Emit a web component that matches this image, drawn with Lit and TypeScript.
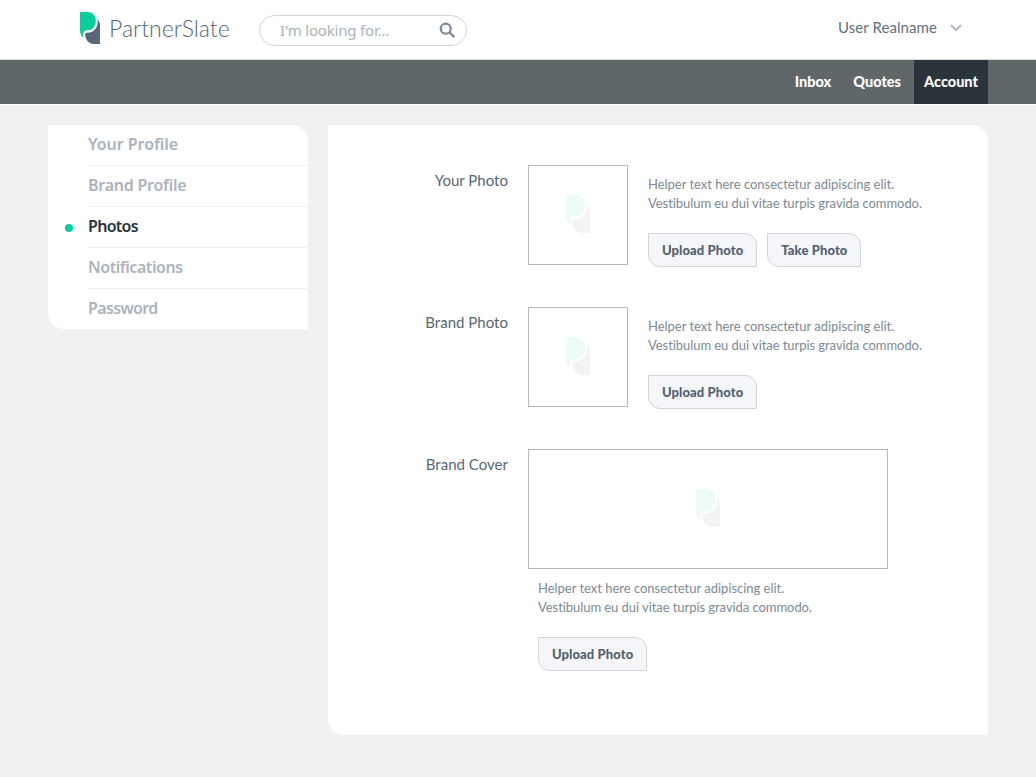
import { LitElement, html, css, svg } from "lit";
import { customElement, property } from "lit/decorators.js";
import { classMap } from "lit/directives/class-map.js";
import { styleMap } from "lit/directives/style-map.js";

@customElement("ps-mark")
class PsMark extends LitElement {
  static styles = css`
    :host { display: block; }
    svg { display: block; width: 100%; height: 100%; }
    .green { fill: #06cd9b; }
    .slate { fill: #566778; }
  `;
  render() {
    return html`<svg viewBox="0 0 24 38" preserveAspectRatio="none">
      ${svg`<path class="green" d="M0 0H9C15.500 0 19 5 19 10.800S15 21.800 9.500 21.800C5.400 21.800 4 23.500 4 26.500V30.500C1.600 28.500 0 25.500 0 22Z"/>
      <path class="slate" d="M21 8.500C23 10.300 24 12.800 24 16V38H17C10.500 38 6.200 33 6.200 26.500C6.200 25 7.200 24.700 9 24.700C17 24.400 22.800 17.500 21 8.500Z"/>`}
    </svg>`;
  }
}

@customElement("ps-photo-row")
class PsPhotoRow extends LitElement {
  @property() label = "";
  @property({ type: Array }) actions: string[] = [];
  @property({ type: Boolean }) cover = false;

  static styles = css`
    :host { display: block; }
    .row { display: flex; align-items: flex-start; }
    .label { width: 180px; margin-right: 20px; padding-top: 4px; text-align: right; font-size: 15px; line-height: 22px; letter-spacing: 0.02px; color: #566778; }
    .frame { box-sizing: border-box; width: 100px; height: 100px; border: 1px solid #b8b9ba; display: flex; align-items: flex-start; justify-content: center; padding-top: 29px; }
    .frame ps-mark { width: 24px; height: 38px; opacity: 0.07; }
    .info { margin-left: 20px; padding-top: 10px; }
    .body { display: flex; }
    .help { margin: 0; font-size: 13px; line-height: 19px; letter-spacing: -0.06px; color: #7c8996; white-space: nowrap; }
    .lead { letter-spacing: -0.02px; }
    .buttons { display: flex; gap: 10px; margin-top: 20px; }
    button { box-sizing: border-box; height: 34px; padding: 0 13px; border: 1px solid #d0d5da; border-radius: 0 12px 0 12px; background: #f5f6f9; color: #526273; font: 900 13px/32px Lato, sans-serif; letter-spacing: 0.1px; white-space: nowrap; }
    .cover .body { flex-direction: column; }
    .cover .frame { width: 360px; height: 120px; padding-top: 39px; }
    .cover .info { margin-left: 10px; }
  `;
  render() {
    return html`<div class=${classMap({ row: true, cover: this.cover })}>
      <div class="label">${this.label}</div>
      <div class="body">
        <div class="frame"><ps-mark></ps-mark></div>
        <div class="info">
          <p class="help"><span class="lead">Helper text here consectetur adipiscing elit.</span><br />Vestibulum eu dui vitae turpis gravida commodo.</p>
          <div class="buttons">${this.actions.map((a) => html`<button>${a}</button>`)}</div>
        </div>
      </div>
    </div>`;
  }
}

@customElement("app-root")
class AppRoot extends LitElement {
  static styles = css`
    :host { display: block; min-height: 777px; background: #f0f1f3; font-family: Lato, sans-serif; }
    .top { box-sizing: border-box; height: 60px; background: #fff; border-bottom: 1px solid #d9dbdc; display: flex; align-items: flex-start; padding: 0 74px 0 80px; }
    .mark { width: 20px; height: 32px; margin-top: 12px; }
    .brand { width: 150px; margin: 13px 0 0 9px; font-size: 23px; line-height: 30px; font-weight: 300; color: #566778; white-space: nowrap; }
    .search { box-sizing: border-box; width: 208px; height: 31px; margin: 15px 0 0; border: 1px solid #d0d3da; border-radius: 16px; display: flex; align-items: center; justify-content: space-between; padding: 0 10px 0 20px; font: 15px/29px "Noto Sans", sans-serif; letter-spacing: -0.18px; color: #a9b2bc; }
    .user { margin: 16px 0 0 auto; display: flex; align-items: center; gap: 13px; font-size: 15px; line-height: 22px; letter-spacing: 0.08px; color: #5f7082; }
    .search svg, .user svg { display: block; }
    .user svg { margin-top: 1px; }
    .nav { box-sizing: border-box; height: 45px; background: #5f6769; border-bottom: 1px solid #fff; display: flex; gap: 22px; justify-content: flex-end; padding-right: 48px; color: #fff; font-size: 14.5px; line-height: 44px; font-weight: 900; }
    .nav .on { background: #2b343a; width: 74px; margin-left: -9px; text-align: center; }
    .main { display: flex; align-items: flex-start; gap: 20px; padding: 20px 48px 0; }
    .side { box-sizing: border-box; width: 260px; height: 204px; background: #fff; border-radius: 0 16px 0 16px; padding-left: 40px; }
    .item { box-sizing: border-box; height: 41px; border-bottom: 1px solid #f1f2f4; font: 600 16px/38px "Noto Sans", sans-serif; color: #abb3be; white-space: nowrap; display: flex; }
    .item:last-child { border-bottom: 0; }
    .item.on { color: #2b343a; }
    .dot { width: 8px; height: 8px; border-radius: 50%; background: #06cd9b; margin: 17px 15px 0 -23px; }
    .panel { box-sizing: border-box; width: 660px; height: 610px; background: #fff; border-radius: 0 16px 0 16px; padding-top: 40px; display: flex; flex-direction: column; gap: 40px; }
  `;
  render() {
    const items = [
      { name: "Your Profile", tracking: -0.05 },
      { name: "Brand Profile", tracking: -0.25 },
      { name: "Photos", tracking: -0.7, active: true },
      { name: "Notifications", tracking: -0.45 },
      { name: "Password", tracking: -0.65 },
    ];
    return html`
      <header class="top">
        <ps-mark class="mark"></ps-mark>
        <div class="brand">PartnerSlate</div>
        <div class="search"><span>I'm looking for...</span>
          <svg width="17" height="17" viewBox="0 0 17 17" fill="none" stroke="#7b8998"><circle cx="6.700" cy="6.700" r="5" stroke-width="2.200" /><path d="M10.500 10.500L15.500 15.200" stroke-width="2.400" /></svg>
        </div>
        <div class="user"><span>User Realname</span>
          <svg width="12" height="8" viewBox="0 0 12 8" fill="none" stroke="#abb3bf" stroke-width="2"><path d="M1 1.200L6 6.200L11 1.200" /></svg>
        </div>
      </header>
      <nav class="nav"><span>Inbox</span><span>Quotes</span><span class="on">Account</span></nav>
      <main class="main">
        <aside class="side">
          ${items.map((t) => html`<div class=${classMap({ item: true, on: !!t.active })}>${t.active ? html`<i class="dot"></i>` : ""}<span style=${styleMap({ letterSpacing: `${t.tracking}px` })}>${t.name}</span></div>`)}
        </aside>
        <section class="panel">
          <ps-photo-row label="Your Photo" .actions=${["Upload Photo", "Take Photo"]}></ps-photo-row>
          <ps-photo-row label="Brand Photo" .actions=${["Upload Photo"]}></ps-photo-row>
          <ps-photo-row label="Brand Cover" cover .actions=${["Upload Photo"]}></ps-photo-row>
        </section>
      </main>`;
  }
}
